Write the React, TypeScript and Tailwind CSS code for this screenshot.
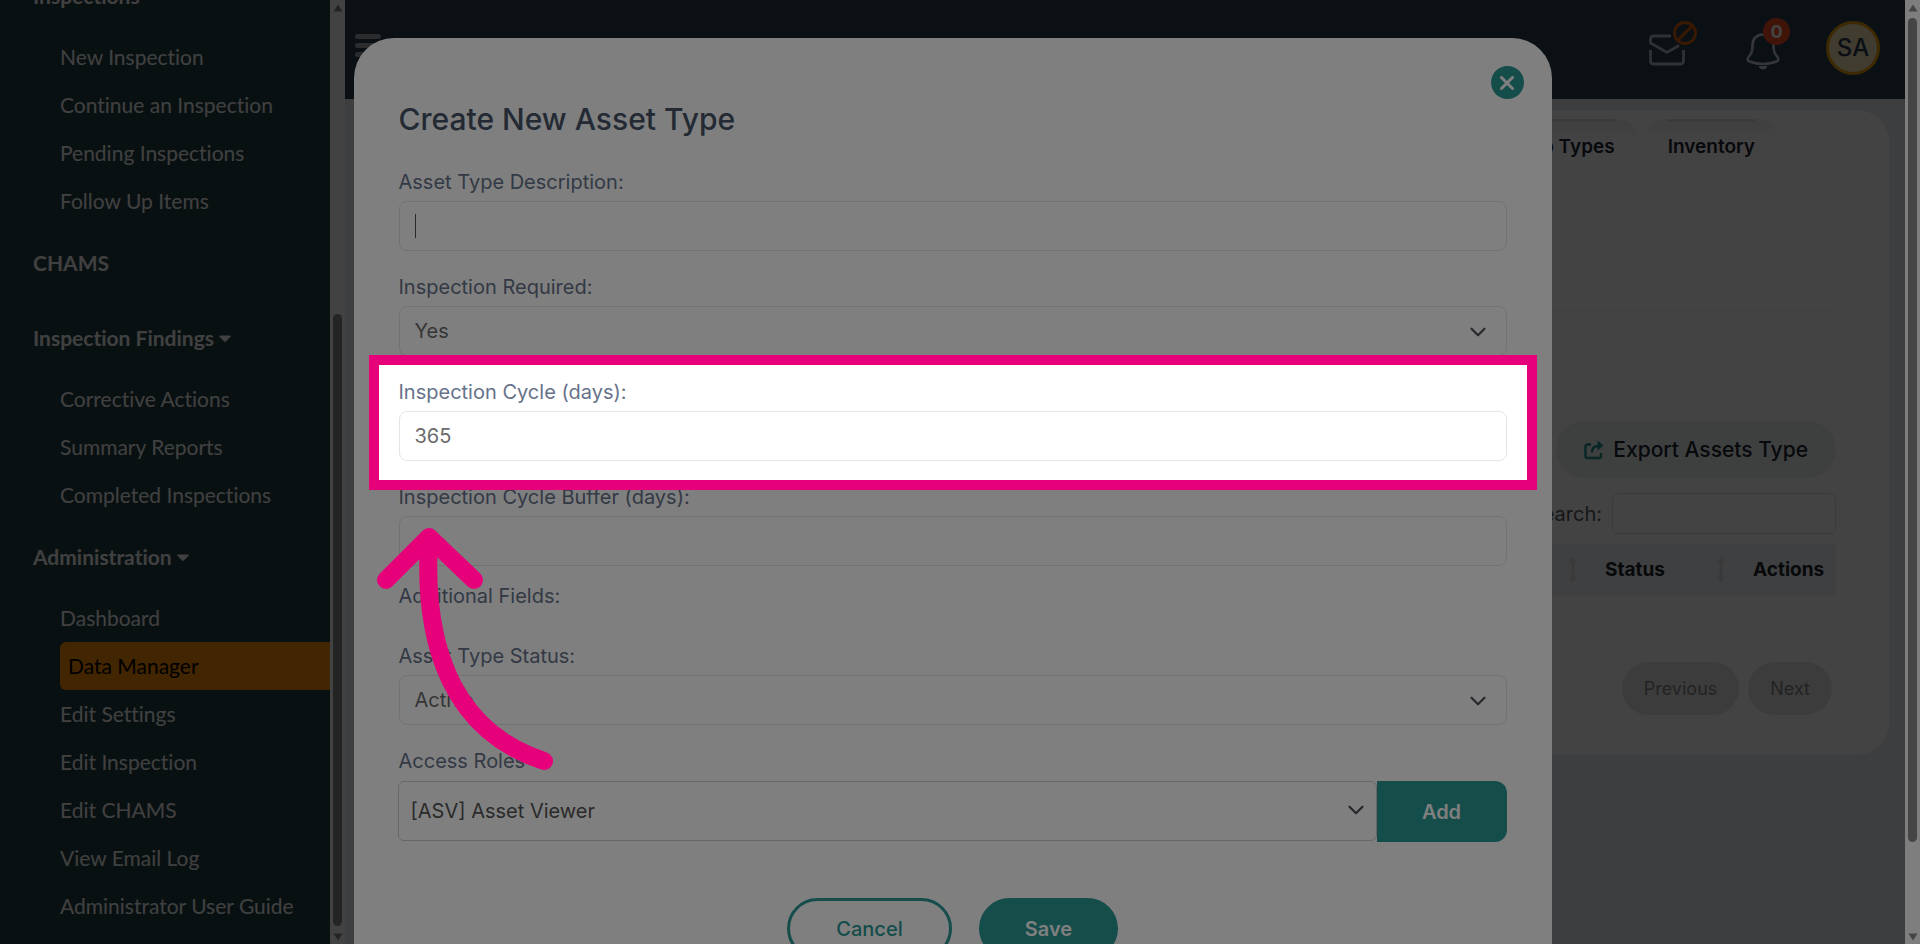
import { ReactNode } from 'react';
import { ChevronDown } from 'lucide-react';
import { FaCaretDown } from 'react-icons/fa';

interface NavGroup {
  title: string;
  caret?: boolean;
  items: string[];
}

const NAV: NavGroup[] = [
  {
    title: 'Inspections',
    caret: true,
    items: ['New Inspection', 'Continue an Inspection', 'Pending Inspections', 'Follow Up Items'],
  },
  { title: 'CHAMS', items: [] },
  {
    title: 'Inspection Findings',
    caret: true,
    items: ['Corrective Actions', 'Summary Reports', 'Completed Inspections'],
  },
  {
    title: 'Administration',
    caret: true,
    items: [
      'Dashboard',
      'Data Manager',
      'Edit Settings',
      'Edit Inspection',
      'Edit CHAMS',
      'View Email Log',
      'Administrator User Guide',
    ],
  },
];

const ScrollArrow = ({ down = false }: { down?: boolean }) => (
  <svg viewBox="0 0 10 8" className={`w-[10px] h-2 shrink-0 ${down ? 'rotate-180' : ''}`}>
    <path d="M5 0.5 L9.5 7.5 H0.5 Z" fill="currentColor" />
  </svg>
);

const Sidebar = () => (
  <aside className="flex w-[345px] shrink-0 bg-[#223d44]">
    <nav className="-mt-7 flex-1 font-['Lato',sans-serif] text-[21px] whitespace-nowrap text-[#f4f4f4] [font-variant-ligatures:none]">
      {NAV.map((group) => (
        <div key={group.title} className="flex flex-col gap-[13px] pb-[14px]">
          <a href="#" className="flex h-12 items-center gap-1 pl-[33px] font-bold">
            {group.title}
            {group.caret && <FaCaretDown className="h-5 w-[14px]" />}
          </a>
          <ul className="pl-[60px]">
            {group.items.map((item) => (
              <li key={item}>
                <a
                  href="#"
                  className={
                    item === 'Data Manager'
                      ? 'flex h-12 items-center rounded-l-md bg-[#f98e05] pl-2 text-black'
                      : 'flex h-12 items-center'
                  }
                >
                  {item}
                </a>
              </li>
            ))}
          </ul>
        </div>
      ))}
    </nav>
    <div className="flex w-[15px] flex-col items-center bg-[#fafafa] pt-1 pb-[3px] text-[#8b8b8b]">
      <ScrollArrow />
      <div className="flex-[302]" />
      <div className="w-[9px] flex-[613] rounded-full bg-[#8b8b8b]" />
      <div className="h-[7px]" />
      <ScrollArrow down />
    </div>
  </aside>
);

const TopBar = () => (
  <header className="flex h-[99px] shrink-0 items-start justify-between bg-[#2b3f4e] pr-[25px] pl-[10px]">
    <button type="button" aria-label="Toggle menu" className="mt-[34px] flex w-[26px] flex-col gap-1">
      <span className="h-[5px] rounded-sm bg-[#a4a6ac]" />
      <span className="h-[5px] rounded-sm bg-[#a4a6ac]" />
      <span className="h-[5px] rounded-sm bg-[#a4a6ac]" />
    </button>
    <div className="flex items-start">
      <button type="button" aria-label="Messages" className="relative mt-[34px] mr-[61px]">
        <svg viewBox="0 0 36 32" className="h-8 w-9" fill="none" stroke="#b4bac6" strokeWidth="2.8">
          <path d="M22 2 H4.500 Q1.500 2 1.500 5 V9 L18 18.500 L30 11.500" />
          <path d="M1.500 16 V27 Q1.500 30 4.500 30 H31.500 Q34.500 30 34.500 27 V16" />
        </svg>
        <svg
          viewBox="0 0 24 24"
          className="absolute -top-[13px] left-6 h-6 w-6"
          fill="none"
          stroke="#dc5f0c"
          strokeWidth="2.8"
        >
          <circle cx="12" cy="12" r="10.500" />
          <path d="M5 19 L19 5" />
        </svg>
      </button>
      <button type="button" aria-label="Notifications" className="relative mt-[33px] mr-[46px]">
        <svg viewBox="0 0 34 37" className="h-[37px] w-[34px]">
          <path
            d="M17 1.5 C10.5 1.5 6.5 6 6.5 12 C6.5 18.5 5.5 20.5 2.5 24 C1 26 1.5 28 4 28.8 C12 31.5 22 31.5 30 28.8 C32.5 28 33 26 31.5 24 C28.5 20.5 27.5 18.5 27.5 12 C27.5 6 23.5 1.5 17 1.5 Z"
            fill="none"
            stroke="#c9ccd4"
            strokeWidth="2.6"
          />
          <path d="M12.5 33 H21.5 Q20 36.5 17 36.5 Q14 36.5 12.5 33 Z" fill="#c9ccd4" />
        </svg>
        <span className="absolute -top-[15px] left-[17px] flex h-[27px] w-[27px] items-center justify-center rounded-full bg-[#f24c20] text-[18px] font-bold text-white">
          0
        </span>
      </button>
      <button
        type="button"
        className="mt-[21px] flex h-[54px] w-[54px] items-center justify-center rounded-full border-3 border-[#e6a008] bg-[#f2e2b4] text-[24px] font-medium text-[#2a3b50]"
      >
        SA
      </button>
    </div>
  </header>
);

const Tab = ({ children }: { children: ReactNode }) => (
  <a
    href="#"
    className="flex flex-col rounded-t-[20px] bg-linear-to-b from-[#f0f0f0] to-white to-60% px-[23px] text-[19px] leading-6 font-semibold text-[#1c2433]"
  >
    <span className="mb-[13px] h-[3px] rounded-full bg-[#dedede]" />
    {children}
  </a>
);

// double headed arrow shown between sortable columns
const SortIcon = () => (
  <svg viewBox="0 0 8 26" className="h-[26px] w-2">
    <path d="M4 0 L8 6 H5.500 V20 H8 L4 26 L0 20 H2.500 V6 H0 Z" fill="#dcdde1" />
  </svg>
);

const AssetTypesCard = () => (
  <section className="m-4 mt-[11px] rounded-[32px] bg-white pr-[53px] pb-10 pl-9">
    <div className="flex justify-end gap-[7px] pt-[9px] pr-[58px]">
      <Tab>Group Types</Tab>
      <Tab>Inventory</Tab>
    </div>
    <hr className="mt-[151px] border-[#f2f2f2]" />
    <div className="mt-[110px] flex justify-end">
      <button
        type="button"
        className="flex h-[57px] items-center gap-[9px] rounded-full bg-[#eaf2ef] px-7 text-[21px] font-medium text-[#1c2433]"
      >
        <svg viewBox="0 0 20 20" className="h-5 w-5" fill="none" stroke="#1f9090" strokeWidth="2.4">
          <path d="M7 4.5 H3.5 Q1.5 4.5 1.5 6.5 V16 Q1.5 18 3.5 18 H15 Q17 18 17 16 V13" />
          <path d="M8 12.500 Q8 6 14.500 6" />
          <path d="M13.5 0.5 L19.5 5.5 L13.5 10.5 Z" fill="#1f9090" stroke="none" />
        </svg>
        Export Assets Type
      </button>
    </div>
    <div className="mt-[15px] flex items-center justify-end gap-[10px]">
      <label htmlFor="search" className="text-[20px] text-[#55595f]">
        Search:
      </label>
      <input id="search" className="h-[41px] w-56 rounded-md border border-[#dedede]" />
    </div>
    <table className="mt-[10px] w-full table-fixed text-left text-[19px] font-semibold text-[#20242b]">
      <thead>
        <tr className="h-[52px] bg-[#f0f1f6]">
          <th>Description</th>
          <th className="w-9">
            <SortIcon />
          </th>
          <th className="w-28">Status</th>
          <th className="w-9">
            <SortIcon />
          </th>
          <th className="w-[83px]">Actions</th>
        </tr>
      </thead>
    </table>
    <div className="mt-[66px] flex justify-end gap-[9px] pr-1 text-[18px] text-[#85868a]">
      <button type="button" className="h-[53px] rounded-full bg-[#e4e4e4] px-[22px]">
        Previous
      </button>
      <button type="button" className="h-[53px] rounded-full bg-[#e4e4e4] px-[22px]">
        Next
      </button>
    </div>
  </section>
);

interface FieldProps {
  id: string;
  label: string;
  children: ReactNode;
}

const Field = ({ id, label, children }: FieldProps) => (
  <div className="relative mb-[21px]">
    <label htmlFor={id} className="mb-1 block text-[20px] leading-[30px] text-[#66728a]">
      {label}
    </label>
    {children}
  </div>
);

const inputClass =
  'block h-[50px] w-full appearance-none rounded-lg border border-[#e4e5ea] bg-white px-[15px] text-[20px] text-[#6b6b6b] outline-none';

const SelectBox = ({ id, value }: { id: string; value: string }) => (
  <div className="relative">
    <select id={id} defaultValue={value} className={inputClass}>
      <option>{value}</option>
    </select>
    <ChevronDown
      className="pointer-events-none absolute top-[13px] right-4 h-[26px] w-[26px] text-[#4a4f57]"
      strokeWidth={2}
    />
  </div>
);

// dims everything around the field and points an arrow at it
const Spotlight = () => (
  <>
    <div className="pointer-events-none absolute -inset-x-5 -top-3 -bottom-[19px] z-10 shadow-[0_0_0_10px_#e6007a,0_0_0_4000px_rgba(0,0,0,0.5)]" />
    <svg
      viewBox="370 461 190 320"
      className="pointer-events-none absolute top-full -left-7 z-20 h-[320px] w-[190px]"
      fill="none"
      stroke="#e6007a"
      strokeWidth="18"
      strokeLinecap="round"
      strokeLinejoin="round"
    >
      <path d="M385 580 L428 537 L473 580" />
      <path d="M428 540 C422 640 448 730 543 761" />
    </svg>
  </>
);

const CreateAssetTypeModal = () => (
  <div
    role="dialog"
    aria-labelledby="modal-title"
    className="relative w-full max-w-[1198px] rounded-[40px] bg-white px-[45px] pt-[61px] pb-20"
  >
    <button
      type="button"
      aria-label="Close"
      className="absolute top-7 right-7 flex h-[33px] w-[33px] items-center justify-center rounded-full bg-[#2a9a96]"
    >
      <svg viewBox="0 0 14 14" className="h-[14px] w-[14px]" stroke="white" strokeWidth="3" strokeLinecap="round">
        <path d="M1.5 1.5 L12.5 12.5 M12.5 1.5 L1.5 12.5" />
      </svg>
    </button>
    <h2 id="modal-title" className="mb-7 text-[30px] leading-10 font-medium text-[#475569]">
      Create New Asset Type
    </h2>
    <Field id="description" label="Asset Type Description:">
      <div className="relative">
        <input id="description" className={inputClass} />
        <span className="absolute top-[13px] left-4 h-6 w-px bg-[#555]" />
      </div>
    </Field>
    <Field id="required" label="Inspection Required:">
      <SelectBox id="required" value="Yes" />
    </Field>
    <Field id="cycle" label="Inspection Cycle (days):">
      <input id="cycle" defaultValue="365" className={inputClass} />
      <Spotlight />
    </Field>
    <Field id="buffer" label="Inspection Cycle Buffer (days):">
      <input id="buffer" className={inputClass} />
    </Field>
    <p className="-mt-1.5 mb-[30px] text-[20px] leading-[30px] text-[#66728a]">Additional Fields:</p>
    <Field id="status" label="Asset Type Status:">
      <SelectBox id="status" value="Active" />
    </Field>
    <Field id="roles" label="Access Roles">
      <div className="-ml-px flex pt-px">
        <div className="relative flex-1">
          <select
            id="roles"
            defaultValue="[ASV] Asset Viewer"
            className="block h-[60px] w-full appearance-none rounded-md border border-[#cfcfcf] bg-white px-3 text-[20px] text-[#555]"
          >
            <option>[ASV] Asset Viewer</option>
          </select>
          <ChevronDown className="pointer-events-none absolute top-4 right-2 h-[26px] w-[26px] text-[#4a4f57]" />
        </div>
        <button
          type="button"
          className="h-[61px] w-[130px] rounded-r-xl bg-[#2a9a96] text-[20px] font-semibold text-white"
        >
          Add
        </button>
      </div>
    </Field>
    <div className="mt-14 flex justify-center gap-[27px] text-[20px]">
      <button
        type="button"
        className="h-[61px] w-[165px] rounded-full border-3 border-[#2a9a96] font-medium text-[#2a9a96]"
      >
        Cancel
      </button>
      <button type="button" className="h-[61px] w-[139px] rounded-full bg-[#2a9a96] font-semibold text-white">
        Save
      </button>
    </div>
  </div>
);

const App = () => (
  <div className="relative flex h-screen overflow-hidden font-['Inter',sans-serif]">
    <Sidebar />
    <main className="flex min-w-0 flex-1 flex-col bg-[#e6eaf1]">
      <TopBar />
      <AssetTypesCard />
    </main>
    <div className="flex w-[15px] shrink-0 flex-col items-center bg-[#fcfcfc] pt-1 pb-[3px] text-[#8b8b8b]">
      <ScrollArrow />
      <div className="h-[6px]" />
      <div className="w-[9px] flex-[824] rounded-full bg-[#8b8b8b]" />
      <div className="flex-[91]" />
      <ScrollArrow down />
    </div>

    {/* modal layer, leaves the page scrollbar uncovered */}
    <div className="fixed inset-y-0 right-[15px] left-0 flex items-start justify-center bg-black/47 pt-[38px]">
      <CreateAssetTypeModal />
    </div>
  </div>
);

export default App;
